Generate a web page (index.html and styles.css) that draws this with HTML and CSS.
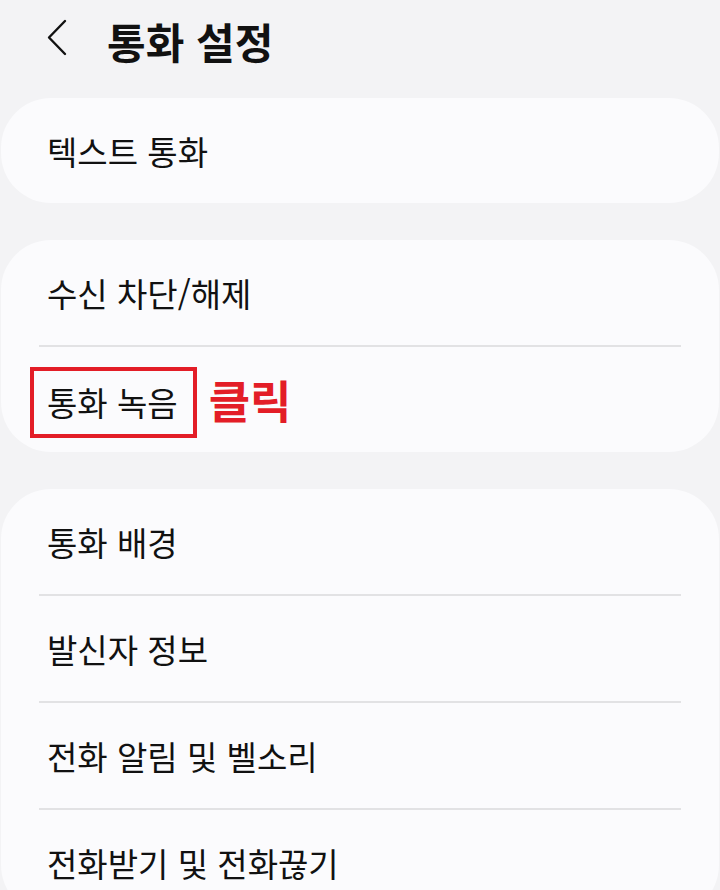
FILE: index.html
```html
<!DOCTYPE html>
<html lang="ko">
<head>
<meta charset="UTF-8">
<title>통화 설정</title>
<link rel="stylesheet" href="styles.css">
</head>
<body>

<div class="header">
	<span class="back">
		<svg width="24" height="40" viewBox="0 0 24 40"><polyline points="19,2 3,18.5 19,35" fill="none" stroke="#111" stroke-width="2.4" stroke-linecap="round" stroke-linejoin="round"/></svg>
	</span>
	<h1>통화 설정</h1>
</div>

<div class="card">
	<div class="row">텍스트 통화</div>
</div>

<div class="card">
	<div class="row">수신 차단/해제</div>
	<div class="divider"></div>
	<div class="row">
		<span class="mark">통화 녹음</span>
		<span class="click">클릭</span>
	</div>
</div>

<div class="card">
	<div class="row">통화 배경</div>
	<div class="divider"></div>
	<div class="row">발신자 정보</div>
	<div class="divider"></div>
	<div class="row">전화 알림 및 벨소리</div>
	<div class="divider"></div>
	<div class="row">전화받기 및 전화끊기</div>
</div>

</body>
</html>
```

FILE: styles.css
```css
body {
	margin: 0;
	background-color: #f3f3f5;
	color: #111;
	font-family: "Noto Sans CJK KR", "Noto Sans", sans-serif;
	overflow: hidden;
}

.header {
	display: flex;
	align-items: center;
	height: 80px;
	padding-left: 46px;
	margin-bottom: 18px;
}

.back {
	display: flex;
	width: 61px;
	margin-top: -2px;
}

h1 {
	margin: 0;
	font-size: 42px;
	font-weight: 700;
}

/* rounded groups */
.card {
	background-color: #fbfbfd;
	border-radius: 50px;
	margin: 0 1px 37px;
}

.row {
	display: flex;
	align-items: center;
	height: 105px;
	padding-left: 46px;
	font-size: 33px;
}

.divider {
	height: 2px;
	margin: 0 38px;
	background-color: #e2e2e4;
}

.mark {
	border: 4px solid #e31d27;
	padding: 7px 15px 8px 13px;
	margin-left: -17px;
	margin-top: 6px;
}

.click {
	margin-left: 12px;
	color: #e31d27;
	font-size: 45px;
	font-weight: 700;
}
```
